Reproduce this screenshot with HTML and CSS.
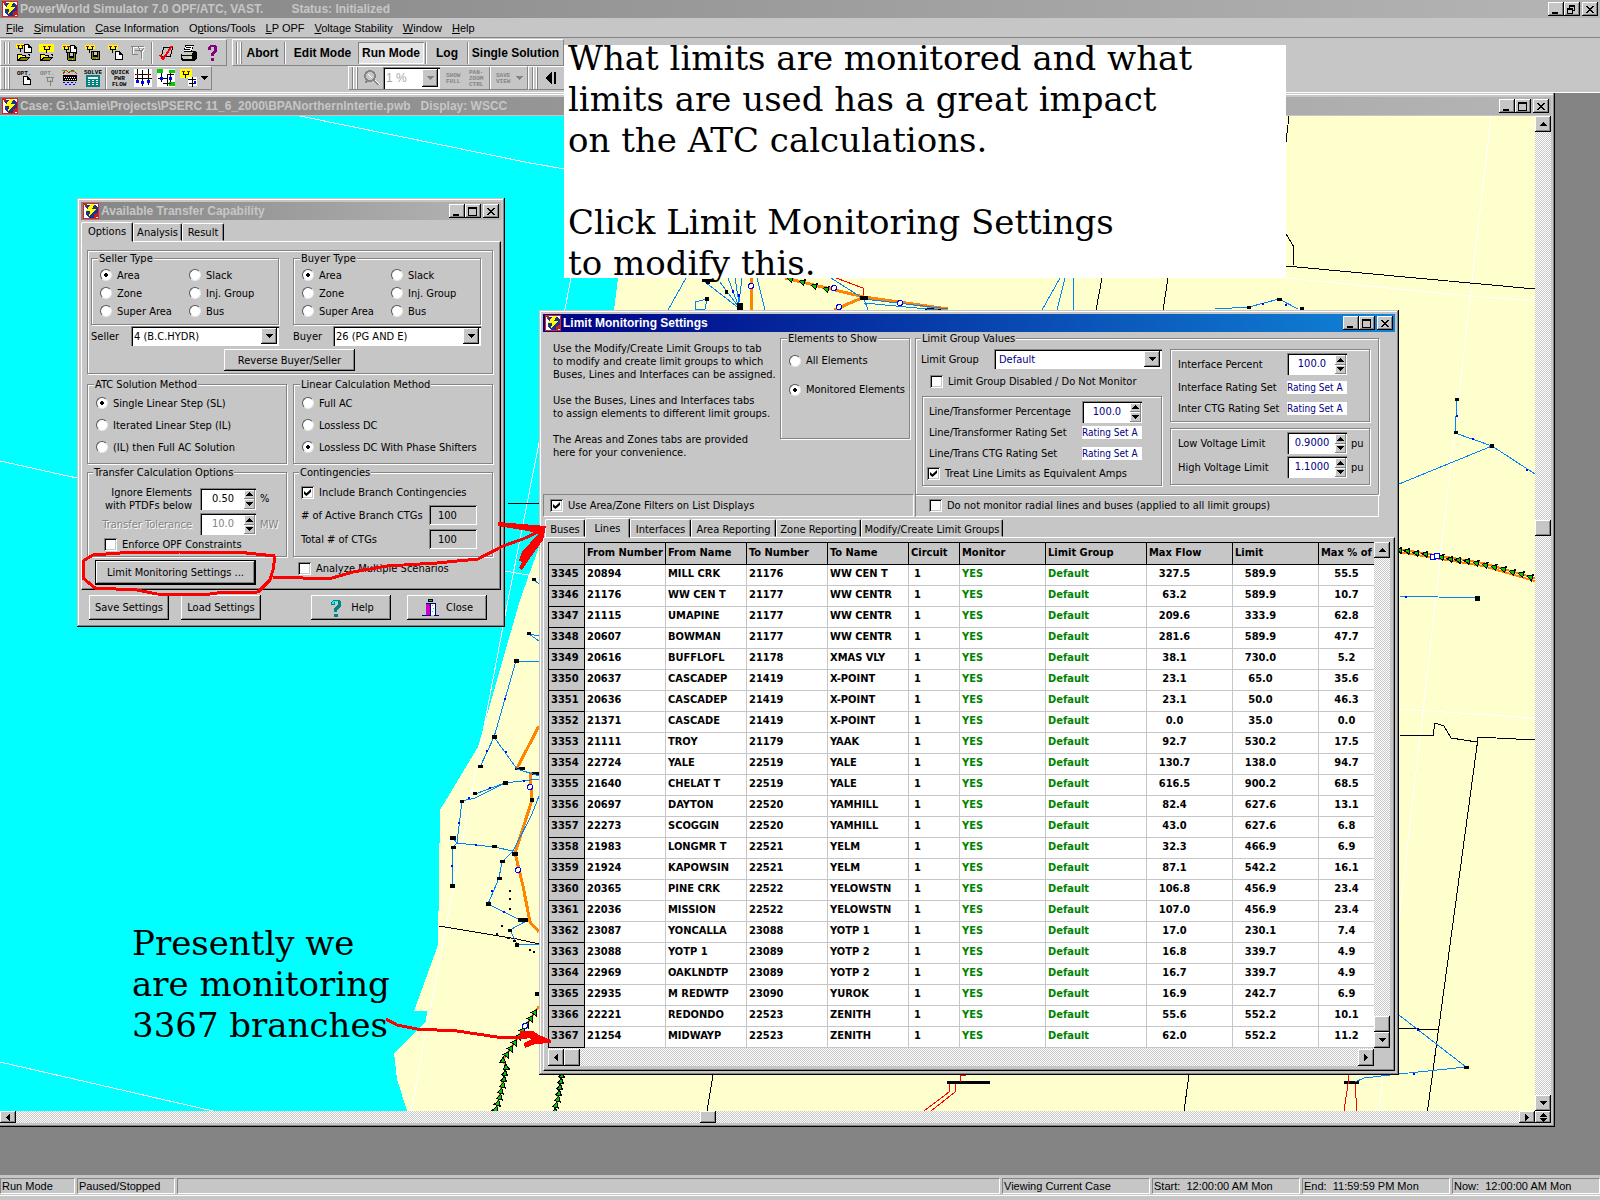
FILE: index.html
```html
<!DOCTYPE html>
<html lang="en">
<head>
<meta charset="utf-8">
<title>PowerWorld Simulator 7.0 OPF/ATC, VAST.</title>
<link rel="stylesheet" href="styles.css">
</head>
<body>
<svg class="defs" aria-hidden="true">
  <symbol id="app" viewBox="0 0 16 16"><path fill="#e02020" d="M0 0h16v16H0z"/><path fill="#fff" d="M1 1h14v14H1z"/><path fill="#203090" d="M1 3l3 2-1 7 4 3h4l4-3V5l-3-4-2 3-4-2z"/><path fill="#c02020" d="M1 1h3l-1 4zM11 11l4-1v4l-4 1z"/><path fill="#ff0" d="M8 1h4l-3 5h4l-7 8 1-6H3z"/></symbol>
  <symbol id="up" viewBox="0 0 7 4"><path d="M3 0h1v1h1v1h1v1h1v1H0V3h1V2h1V1h1z"/></symbol>
  <symbol id="down" viewBox="0 0 7 4"><path d="M0 0h7v1H6v1H5v1H4v1H3V3H2V2H1V1H0z"/></symbol>
  <symbol id="left" viewBox="0 0 4 7"><path d="M4 0v7H3V6H2V5H1V4H0V3h1V2h1V1h1V0z"/></symbol>
  <symbol id="right" viewBox="0 0 4 7"><path d="M0 0v7h1V6h1V5h1V4h1V3H3V2H2V1H1V0z"/></symbol>
  <symbol id="min" viewBox="0 0 10 9"><path d="M1 7h6v2H1z"/></symbol>
  <symbol id="max" viewBox="0 0 10 9"><path fill-rule="evenodd" d="M0 0h9v9H0zM1 2v6h7V2z"/></symbol>
  <symbol id="rest" viewBox="0 0 10 9"><path fill-rule="evenodd" d="M2 0h6v6H6v3H0V3h2zM3 2v1h3v2h1V2zM1 5v3h4V5z"/></symbol>
  <symbol id="x" viewBox="0 0 10 9"><path d="M1 1h2v1h1v1h2V2h1V1h2v1H8v1H7v1H6v1h1v1h1v1h1v1H7V7H6V6H4v1H3v1H1V7h1V6h1V5h1V4H3V3H2V2H1z"/></symbol>
  <symbol id="tree" viewBox="0 0 10 8"><path fill="#ff0" d="M0 0h10v4H0z"/><path fill="#a00" d="M1 1h3v1H1zM6 1h3v1H6z"/><path d="M2 2h1v2h4V2h1v3H5v3H4V5H2z"/></symbol>
  <symbol id="page" viewBox="0 0 8 10"><path d="M0 0h5l3 3v7H0z"/><path fill="#fff" d="M1 1h3v3h3v5H1z"/></symbol>
  <symbol id="folder" viewBox="0 0 14 8"><path d="M0 1h4l1 1h4v2h4l-3 4H0zM10 1h3v2h-1z"/><path fill="#ff0" d="M1 2h3l1 1h3v1H3L1 7z"/><path fill="#848400" d="M4 5h7L9 7H2z"/></symbol>
  <symbol id="disk" viewBox="0 0 9 9"><path d="M0 0h9v9H1L0 8z"/><path fill="#848400" d="M1 1h1v5h5V1h1v7H1z"/><path fill="#c6c6c6" d="M3 1h3v3H3zM5 7h1v1H5z"/></symbol>
</svg>

<header class="titlebar main">
  <svg class="ico"><use href="#app"/></svg><h1>PowerWorld Simulator 7.0 OPF/ATC, VAST.</h1><span class="status-text">Status: Initialized</span>
  <div class="winbtns"><button aria-label="Minimize"><svg><use href="#min"/></svg></button><button aria-label="Restore"><svg><use href="#rest"/></svg></button><button aria-label="Close"><svg><use href="#x"/></svg></button></div>
</header>
<nav class="menubar">
  <a href="#"><u>F</u>ile</a><a href="#"><u>S</u>imulation</a><a href="#"><u>C</u>ase Information</a><a href="#">O<u>p</u>tions/Tools</a><a href="#"><u>L</u>P OPF</a><a href="#"><u>V</u>oltage Stability</a><a href="#"><u>W</u>indow</a><a href="#"><u>H</u>elp</a>
</nav>

<div class="bars">
  <div class="barrow">
    <div class="bar t1"><i class="grip"></i>
      <button aria-label="Open case"><svg viewBox="0 0 18 18"><use href="#tree" x="1" y="0" width="9" height="8"/><use href="#page" x="9" y="0" width="8" height="9"/><use href="#folder" x="2" y="9" width="14" height="8"/></svg></button>
      <button aria-label="Open display"><svg viewBox="0 0 18 18"><path fill="#ff0" d="M1 0h15v8H1z"/><use href="#tree" x="3" y="1" width="11" height="8"/><use href="#folder" x="2" y="9" width="14" height="8"/></svg></button>
      <button aria-label="Save case"><svg viewBox="0 0 18 18"><use href="#tree" x="1" y="1" width="9" height="8"/><use href="#page" x="9" y="1" width="7" height="9"/><use href="#disk" x="6" y="8" width="9" height="9"/></svg></button>
      <button aria-label="Save display"><svg viewBox="0 0 18 18"><use href="#tree" x="1" y="1" width="10" height="8"/><use href="#disk" x="7" y="7" width="9" height="9"/></svg></button>
      <button aria-label="New display"><svg viewBox="0 0 18 18"><use href="#tree" x="1" y="1" width="10" height="8"/><use href="#page" x="8" y="7" width="8" height="9"/></svg></button>
      <button aria-label="Browse"><svg viewBox="0 0 18 18"><path fill="none" stroke="#fff" d="M2 3.500h13M3.500 3v8M9 3l3 6 3-4M12.500 9v7"/><path fill="none" stroke="#848484" d="M1 2.500h13M2.500 2v8h5M8 2l3 6 3-4M11.500 8v7M5 6.500h5"/></svg></button>
      <i class="sep"></i>
      <button aria-label="Check"><svg viewBox="0 0 18 18"><path fill="none" stroke="#000" d="M6.500 3.500h9l-2 9h-9z"/><path fill="none" stroke="red" stroke-width="2" d="M3 11l3 4L15 2"/></svg></button>
      <button aria-label="Print"><svg viewBox="0 0 18 18"><path d="M5 1h9l-2 6h3l2 2v5l-3 3H2l-1-2v-5l3-3z"/><path fill="#fff" d="M6 2h7l-2 5H4z"/><path stroke="#000" d="M6 3.500h5M5 5.500h5"/><path fill="#c6c6c6" d="M3 8h10l-1 3H2zM2 12h10v3H3z"/><path fill="#ff0" d="M9 13h2v1H9z"/></svg></button>
      <button aria-label="Help"><svg viewBox="0 0 18 18"><path fill="#840084" d="M5 3l2-2h5l2 2v4l-3 3v2H8V9l3-3V3H8v3H5zM8 14h3v3H8z"/></svg></button>
    </div>
    <div class="bar t2"><i class="grip"></i><button class="w41">Abort</button><i class="sep"></i><button class="w71">Edit Mode</button><button class="w66 pressed">Run Mode</button><i class="sep"></i><button class="w38">Log</button><i class="sep"></i><button class="w91">Single Solution</button></div>
  </div>
  <div class="barrow">
    <div class="bar t3"><i class="grip"></i>
      <button aria-label="Options"><svg viewBox="0 0 18 18"><text x="2" y="6" class="pix">OPT.</text><use href="#page" x="8" y="7" width="8" height="9"/></svg></button>
      <button aria-label="Display options"><svg viewBox="0 0 18 18"><text x="2" y="6" class="pix dim">OPT.</text><path fill="none" stroke="#848484" d="M8 8.500h8M9.500 8v4h5V8M12.500 11v6"/></svg></button>
      <button aria-label="Simulation"><svg viewBox="0 0 18 18"><path fill="none" stroke="red" d="M2 5l3-4 3 3 4-3 4 4"/><path stroke="#0c0" d="M1 1.500h4M8 2.500h6"/><path d="M2 6h14v6H2z"/><path stroke="#fff" stroke-dasharray="1 1" d="M3 8.500h12M4 10.500h11"/><path fill="none" stroke="blue" stroke-dasharray="2 2" d="M2 13.500h13M4 15.500h11"/></svg></button>
      <button aria-label="Solve"><svg viewBox="0 0 18 18"><text x="0" y="5" class="pix">SOLVE</text><path fill="#008484" d="M2 6h14v12H2z"/><path fill="#fff" d="M4 8h10v2H4zM4 11h2v1H4zM8 11h2v1H8zM12 11h2v1h-2zM4 13h2v1H4zM8 13h2v1H8zM12 13h2v1h-2zM4 15h2v1H4zM8 15h2v1H8zM12 15h2v1h-2z"/></svg></button>
      <i class="sep"></i>
      <button aria-label="Quick power flow"><svg viewBox="0 0 18 18"><text x="0" y="5" class="pix">QUICK</text><text x="3" y="11" class="pix">PWR</text><text x="1" y="17" class="pix">FLOW</text></svg></button>
      <button aria-label="One-line"><svg viewBox="0 0 18 18"><path fill="#fff" d="M0 0h18v18H0z"/><path fill="none" stroke="#000" d="M1 5.500h16M1 9.500h8M9 9.500h9M3.500 0v13M8.500 1v10M14.500 0v16M8.500 9v8"/><path fill="#00f" d="M2 11h3v3H2zM7 12h3v3H7zM13 11h3v3h-3z"/><path fill="#c00" d="M2 5h3v1H2zM13 5h3v1h-3z"/></svg></button>
      <button aria-label="Bus view"><svg viewBox="0 0 18 18"><path fill="#fff" d="M0 0h18v18H0z"/><path fill="#0c0" d="M0 0h6v4H0zM12 1h6v3h-6zM12 13h6v4h-6z"/><path fill="none" stroke="#000" d="M1 9.500h9M4.500 4v9M10 5.500h7M13.500 4v9M6 14.500h8M10.500 5v12"/><path fill="#00f" d="M3 8h3v3H3zM12 8h3v3h-3z"/></svg></button>
      <button aria-label="Find bus"><svg viewBox="0 0 18 18"><path fill="#ff0" d="M0 0h12v9H0z"/><use href="#tree" x="1" y="1" width="10" height="8"/><path fill="#fff" d="M8 8h9v9H8z"/><path fill="none" stroke="#000" d="M8 10.500h8M12.500 8v10M9 14.500h7"/><path fill="#00f" d="M14 12h2v3h-2z"/></svg></button>
      <svg class="dd"><use href="#down"/></svg>
    </div>
    <div class="bar t4"><i class="grip"></i>
      <button disabled aria-label="Zoom"><svg viewBox="0 0 18 18"><circle cx="7" cy="7" r="5" fill="#c6c6c6" stroke="#848484" stroke-width="2"/><path stroke="#848484" stroke-width="2" d="M10 10l6 6M2 14l3-3"/><path stroke="#fff" d="M12 11l5 5M5 5l4 4"/></svg></button>
      <span class="combo zoomc"><select disabled aria-label="Zoom percent"><option>1 %</option></select><i class="arr dimarr"><svg><use href="#down"/></svg></i></span>
      <button disabled aria-label="Show full"><svg viewBox="0 0 18 18"><text x="1" y="8" class="pix dim">SHOW</text><text x="1" y="14" class="pix dim">FULL</text></svg></button>
      <button disabled aria-label="Pan-zoom control"><svg viewBox="0 0 18 18"><text x="1" y="5" class="pix dim">PAN-</text><text x="1" y="11" class="pix dim">ZOOM</text><text x="1" y="17" class="pix dim">CTRL</text></svg></button>
      <i class="sep"></i>
      <button disabled aria-label="Save view"><svg viewBox="0 0 18 18"><text x="1" y="8" class="pix dim">SAVE</text><text x="1" y="14" class="pix dim">VIEW</text></svg></button>
      <svg class="dd dimarr"><use href="#down"/></svg>
    </div>
    <div class="bar t5"><i class="grip"></i><button aria-label="Back"><svg viewBox="0 0 18 18"><path d="M2 9l7-6v12zM11 3h2v12h-2z"/></svg></button></div>
  </div>
</div>

<main class="workspace">
  <section class="case">
    <header class="titlebar"><svg class="ico"><use href="#app"/></svg><h2>Case: G:\Jamie\Projects\PSERC 11_6_2000\BPANorthernIntertie.pwb &nbsp; Display: WSCC</h2>
      <div class="winbtns"><button aria-label="Minimize"><svg><use href="#min"/></svg></button><button aria-label="Maximize"><svg><use href="#max"/></svg></button><button aria-label="Close"><svg><use href="#x"/></svg></button></div></header>
    <div class="mapgrid">
      <svg class="map" viewBox="0 116 1535 995" preserveAspectRatio="xMinYMin slice">
        <defs><marker id="tri" viewBox="0 0 8 8" refX="4" refY="4" markerWidth="8" markerHeight="8" markerUnits="userSpaceOnUse" orient="auto"><path d="M0 4l7-4v8z"/><path fill="#0c0" d="M2 4l4-2v4z"/></marker></defs>
        <path fill="#ffffce" d="M0 116h1535v995H0z"/>
        <path fill="#0ff" d="M0 116h660L618 278 614 310 539 547 520 600 497 680 478 747 440 810 438 945 414 1011h13l-1 11-32 31 3 26 10 32H0z"/>
        <g fill="none" stroke="#fff"><path d="M300 116l230 47 35 6 721 109 184 18 65 5M600 116L571 278 539 443 508 600 411 1111M0 461l77 17 428 93 34 6M0 1062l213 49M1491 116L1464 350 1399 921 1379 1111M1399 709l136 9"/></g>
        <g fill="none" stroke="#000"><path d="M1289 116l-3 26M1286 234l8 13-1 18M1286 266l249 23M1102 278l-6 32M1168 278l-5 32M508 503l31 1M439 926l78 13 22 5M713 1075l-6 36M1189 1075l-5 36M1399 735l34 1 2-13 9 3 7 12 26 4v-5l58 3M1399 1028l39 2"/><path d="M1477.500 742l-50 369"/><path stroke-width="3" d="M947 1082h43M1344 1082h15M515 768h10M530 773h9M925 309h22M702 280h12"/></g>
        <g fill="none" stroke="red"><path d="M966 1075h-6v7M950 1084l-1 8-25 19M955 1084v8l-24 19M1348 1075v9l-4 27M1355 1084l2 27M836 278l27 10v9"/></g>
        <g fill="none" stroke="#ff8400" stroke-width="3"><path d="M539 726l-22 42M530 772l2 28-17 53 8 33 7 36 9 10M751 278v32M785 278l79 19 84 12M864 297l-30 13"/><path stroke-width="2" d="M539 1006l-36 54 3 7-10 44M562 1075l-7 36M1399 549l84 14 52 15M1399 552l84 14 52 15"/></g>
        <path class="tris" fill="none" stroke="none" d="M539 1006l-4 6-4 6-4 6-4 6-4 6-4 6-4 6-4 6-4 6 3 7-1 6-1 6-1 6-2 6-1 6-2 6-2 6M562 1075l-1 6-1 6-1 6-1 6-2 6-1 6M1399 550l8 1 9 2 9 1 16 3 9 2 8 1 9 1 9 2 9 2 9 2 9 2 9 3 9 2 9 3M790 279l12 3 12 4 12 3 14 4"/>
        <g fill="none" stroke="#0084ff"><path d="M539 662l-23-1-22 76-14 30M494 737l23 32 22 7M529 634l10 7M529 634l10 2M539 779l-34 4-30 15-13 3-5 42 37 4 19 4 19-37 7-18M475 794l30-11M453 838l4 5-4 4-1 39M513 851l-11 11-3 16-11 26 32 16 8 0-18 10 7 14h22M1457 399l-2 34 37 13 43 28M1492 446l-93 38M1399 596l78 2M1399 1015l67 52-67 7-35 4-9 4M686 278l-18 32M831 278l33 21 4 11M864 299l84 10M864 303l84 8M1060 278l-18 32M1065 278l-8 32M1073 278v32M1215 309l34-2 30-8 19 10M705 282l35 27M720 282l20 27M728 278l12 32M735 278l5 32M742 278l-4 32M757 278l8 32M695 302l12-3-2 10h-10zM534 580l5 4"/></g>
        <g fill="#000"><path d="M514 659h5v4h-5zM492 735h5v4h-5zM478 765h5v3h-5zM527 632h4v3h-4zM503 781h5v4h-5zM473 792h4v3h-4zM460 800h4v3h-4zM450 836h6v4h-6zM451 846h5v3h-5zM450 884h5v4h-5zM492 845h5v3h-5zM500 860h5v3h-5zM497 877h5v3h-5zM486 902h5v4h-5zM518 918h10v4h-10zM508 929h4v3h-4zM515 943h4v4h-4zM1455 398h4v3h-4zM1454 431h4v3h-4zM1490 444h4v4h-4zM1475 596h5v5h-5zM1464 1066h5v3h-5zM1277 298h5v3h-5zM1247 306h4v3h-4zM1300 307h4v3h-4zM737 303h6v7h-6zM705 297h4v4h-4zM860 296h8v4h-8zM532 578h4v3h-4zM512 852h6v4h-6zM530 798h4v4h-4zM509 890h2v2h-2zM509 898h2v2h-2zM509 908h2v2h-2zM501 925h2v2h-2zM507 937h3v2h-3zM513 940h3v2h-3zM529 949h2v2h-2zM533 951h2v2h-2zM496 933h2v2h-2zM535 992h4v4h-4zM706 280h4v4h-4zM725 290h3v4h-3z"/></g>
        <g fill="#00f"><path d="M504 698h2v2h-2zM486 750h2v2h-2zM505 751h2v2h-2zM489 787h2v2h-2zM468 797h2v2h-2zM458 822h2v2h-2zM475 844h2v2h-2zM451 865h2v2h-2zM491 890h2v2h-2zM503 911h2v2h-2zM523 780h2v2h-2zM1456 415h2v2h-2zM1472 438h2v2h-2zM1526 469h2v2h-2zM1405 596h2v2h-2zM1413 1073h2v2h-2zM1417 1029h2v2h-2zM1285 304h2v2h-2zM1262 303h2v2h-2zM732 290h2v3h-2zM738 294h2v3h-2z"/></g>
        <g fill="#fff" stroke="#00f"><circle cx="530" cy="787" r="2.500"/><circle cx="518" cy="870" r="2.500"/><circle cx="525" cy="1026" r="2.500"/><circle cx="1433" cy="557" r="3"/><circle cx="1437" cy="556" r="3"/><circle cx="751" cy="286" r="2.500"/><circle cx="834" cy="288" r="2.500"/><circle cx="839" cy="307" r="2.500"/><circle cx="900" cy="303" r="2.500"/></g>
      </svg>
      <div class="vscroll"><button aria-label="Scroll up"><svg class="v"><use href="#up"/></svg></button><i class="thumb mid"></i><button class="last" aria-label="Scroll down"><svg class="v"><use href="#down"/></svg></button></div>
      <div class="hscroll low"><button aria-label="Scroll left"><svg class="h"><use href="#left"/></svg></button><i class="thumb"></i><button class="last" aria-label="Scroll right"><svg class="h"><use href="#right"/></svg></button></div>
      <button class="updown" aria-label="Resize"><svg class="v"><use href="#up"/></svg><svg class="v"><use href="#down"/></svg></button>
    </div>
  </section>
</main>

<footer class="statusbar"><span class="p75">Run Mode</span><span class="p98">Paused/Stopped</span><span class="grow"></span><span class="p148">Viewing Current Case</span><span class="p148">Start: &nbsp;12:00:00 AM Mon</span><span class="p148">End: &nbsp;11:59:59 PM Mon</span><span class="p148">Now: &nbsp;12:00:00 AM Mon</span></footer>

<section class="win atc">
  <header class="titlebar"><svg class="ico"><use href="#app"/></svg><h2>Available Transfer Capability</h2><div class="winbtns"><button aria-label="Minimize"><svg><use href="#min"/></svg></button><button aria-label="Maximize"><svg><use href="#max"/></svg></button><button aria-label="Close"><svg><use href="#x"/></svg></button></div></header>
  <div class="tabs" role="tablist"><button role="tab" class="on w52">Options</button><button role="tab" class="w49">Analysis</button><button role="tab" class="w42">Result</button></div>
  <div class="page">
    <div class="group parties">
      <fieldset class="type"><legend>Seller Type</legend>
        <label><input type="radio" name="st" checked>Area</label><label><input type="radio" name="st">Slack</label><label><input type="radio" name="st">Zone</label><label><input type="radio" name="st">Inj. Group</label><label><input type="radio" name="st">Super Area</label><label><input type="radio" name="st">Bus</label></fieldset>
      <fieldset class="type"><legend>Buyer Type</legend>
        <label><input type="radio" name="bt" checked>Area</label><label><input type="radio" name="bt">Slack</label><label><input type="radio" name="bt">Zone</label><label><input type="radio" name="bt">Inj. Group</label><label><input type="radio" name="bt">Super Area</label><label><input type="radio" name="bt">Bus</label></fieldset>
      <div class="pick"><label for="sel">Seller</label><span class="combo"><select id="sel"><option>4 (B.C.HYDR)</option></select><i class="arr"><svg><use href="#down"/></svg></i></span></div>
      <div class="pick"><label for="buy">Buyer</label><span class="combo"><select id="buy"><option>26 (PG AND E)</option></select><i class="arr"><svg><use href="#down"/></svg></i></span></div>
      <button class="btn reverse">Reverse Buyer/Seller</button>
    </div>
    <div class="pair">
      <fieldset class="method"><legend>ATC Solution Method</legend><label><input type="radio" name="m" checked>Single Linear Step (SL)</label><label><input type="radio" name="m">Iterated Linear Step (IL)</label><label><input type="radio" name="m">(IL) then Full AC Solution</label></fieldset>
      <fieldset class="method"><legend>Linear Calculation Method</legend><label><input type="radio" name="l">Full AC</label><label><input type="radio" name="l">Lossless DC</label><label><input type="radio" name="l" checked>Lossless DC With Phase Shifters</label></fieldset>
    </div>
    <div class="pair third">
      <fieldset class="transfer"><legend>Transfer Calculation Options</legend>
        <label for="ptdf">Ignore Elements<br>with PTDFs below</label><span class="spin"><input id="ptdf" value="0.50"><span><button aria-label="Up"><svg><use href="#up"/></svg></button><button aria-label="Down"><svg><use href="#down"/></svg></button></span></span><span>%</span>
        <label for="tol" class="off">Transfer Tolerance</label><span class="spin"><input id="tol" value="10.0" disabled><span><button aria-label="Up"><svg><use href="#up"/></svg></button><button aria-label="Down"><svg><use href="#down"/></svg></button></span></span><span class="off">MW</span>
        <label class="chk"><input type="checkbox">Enforce OPF Constraints</label></fieldset>
      <fieldset class="ctg"><legend>Contingencies</legend>
        <label class="chk"><input type="checkbox" checked>Include Branch Contingencies</label>
        <label for="act"># of Active Branch CTGs</label><input id="act" class="ro" value="100" readonly>
        <label for="tot">Total # of CTGs</label><input id="tot" class="ro" value="100" readonly></fieldset>
    </div>
    <div class="under"><button class="btn default">Limit Monitoring Settings ...</button><label class="chk"><input type="checkbox">Analyze Multiple Scenarios</label></div>
  </div>
  <div class="foot"><button class="btn">Save Settings</button><button class="btn">Load Settings</button>
    <button class="btn help"><svg viewBox="0 0 16 18" width="16" height="18"><path fill="#008484" d="M3 3l2-2h6l2 2v5l-4 3v2H6v-4l4-3V3H7v3H3zM6 15h4v3H6z"/><path fill="#0ff" d="M5 2h5v1H6v2H4V3z"/></svg>Help</button>
    <button class="btn"><svg viewBox="0 0 18 18" width="18" height="18"><path fill="#0c0" stroke="#000" d="M7.500.500h4v2h-4z"/><path fill="#000084" d="M4 4h11v12h3v1h-5V5h-3v12H5V5z"/><path fill="#c0c" d="M5 5h4v11H5z"/><path fill="#fff" d="M10 5h4v11h-4z"/><path fill="#000084" d="M1 16h5v1H1z"/><path fill="#0cc" d="M11 6h1v1h-1zM12 9h1v1h-1zM11 12h1v1h-1z"/></svg>Close</button></div>
</section>

<section class="win lms">
  <header class="titlebar active"><svg class="ico"><use href="#app"/></svg><h2>Limit Monitoring Settings</h2><div class="winbtns"><button aria-label="Minimize"><svg><use href="#min"/></svg></button><button aria-label="Maximize"><svg><use href="#max"/></svg></button><button aria-label="Close"><svg><use href="#x"/></svg></button></div></header>
  <div class="top">
    <div class="blurb"><p>Use the Modify/Create Limit Groups to tab<br>to modify and create limit groups to which<br>Buses, Lines and Interfaces can be assigned.</p><p>Use the Buses, Lines and Interfaces tabs<br>to assign elements to different limit groups.</p><p>The Areas and Zones tabs are provided<br>here for your convenience.</p></div>
    <fieldset class="show"><legend>Elements to Show</legend><label><input type="radio" name="e">All Elements</label><label><input type="radio" name="e" checked>Monitored Elements</label></fieldset>
    <fieldset class="values"><legend>Limit Group Values</legend>
      <div class="lcol">
        <div class="lg"><label for="lg">Limit Group</label><span class="combo navy"><select id="lg"><option>Default</option></select><i class="arr"><svg><use href="#down"/></svg></i></span></div>
        <label class="chk dis"><input type="checkbox">Limit Group Disabled / Do Not Monitor</label>
        <div class="group lines">
          <label for="a1">Line/Transformer Percentage</label><span class="spin navy"><input id="a1" value="100.0"><span><button aria-label="Up"><svg><use href="#up"/></svg></button><button aria-label="Down"><svg><use href="#down"/></svg></button></span></span>
          <label for="a2">Line/Transformer Rating Set</label><input id="a2" class="rs" value="Rating Set A">
          <label for="a3">Line/Trans CTG Rating Set</label><input id="a3" class="rs" value="Rating Set A">
          <label class="chk"><input type="checkbox" checked>Treat Line Limits as Equivalent Amps</label>
        </div>
      </div>
      <div class="rcol">
        <div class="group iface">
          <label for="b1">Interface Percent</label><span class="spin navy"><input id="b1" value="100.0"><span><button aria-label="Up"><svg><use href="#up"/></svg></button><button aria-label="Down"><svg><use href="#down"/></svg></button></span></span>
          <label for="b2">Interface Rating Set</label><input id="b2" class="rs" value="Rating Set A">
          <label for="b3">Inter CTG Rating Set</label><input id="b3" class="rs" value="Rating Set A">
        </div>
        <div class="group volt">
          <label for="c1">Low Voltage Limit</label><span class="spin navy"><input id="c1" value="0.9000"><span><button aria-label="Up"><svg><use href="#up"/></svg></button><button aria-label="Down"><svg><use href="#down"/></svg></button></span></span><span>pu</span>
          <label for="c2">High Voltage Limit</label><span class="spin navy"><input id="c2" value="1.1000"><span><button aria-label="Up"><svg><use href="#up"/></svg></button><button aria-label="Down"><svg><use href="#down"/></svg></button></span></span><span>pu</span>
        </div>
      </div>
    </fieldset>
  </div>
  <div class="filters"><label class="chk fl"><input type="checkbox" checked>Use Area/Zone Filters on List Displays</label><label class="chk fr"><input type="checkbox">Do not monitor radial lines and buses (applied to all limit groups)</label></div>
  <div class="tabs lt" role="tablist"><button role="tab" class="w39">Buses</button><button role="tab" class="on w45">Lines</button><button role="tab" class="w60">Interfaces</button><button role="tab" class="w85">Area Reporting</button><button role="tab" class="w85">Zone Reporting</button><button role="tab" class="w141">Modify/Create Limit Groups</button></div>
  <div class="page gridpage">
    <div class="tablewrap">
    <table>
      <colgroup><col class="c37"><col class="c81"><col class="c81"><col class="c81"><col class="c81"><col class="c51"><col class="c86"><col class="c101"><col class="c86"><col class="c86"><col></colgroup>
      <thead><tr><td></td><th>From Number</th><th>From Name</th><th>To Number</th><th>To Name</th><th>Circuit</th><th>Monitor</th><th>Limit Group</th><th>Max Flow</th><th>Limit</th><th>Max % of</th></tr></thead>
      <tbody>
<tr><th>3345<td>20894<td>MILL CRK<td>21176<td>WW CEN T<td>1<td>YES<td>Default<td>327.5<td>589.9<td>55.5
<tr><th>3346<td>21176<td>WW CEN T<td>21177<td>WW CENTR<td>1<td>YES<td>Default<td>63.2<td>589.9<td>10.7
<tr><th>3347<td>21115<td>UMAPINE<td>21177<td>WW CENTR<td>1<td>YES<td>Default<td>209.6<td>333.9<td>62.8
<tr><th>3348<td>20607<td>BOWMAN<td>21177<td>WW CENTR<td>1<td>YES<td>Default<td>281.6<td>589.9<td>47.7
<tr><th>3349<td>20616<td>BUFFLOFL<td>21178<td>XMAS VLY<td>1<td>YES<td>Default<td>38.1<td>730.0<td>5.2
<tr><th>3350<td>20637<td>CASCADEP<td>21419<td>X-POINT<td>1<td>YES<td>Default<td>23.1<td>65.0<td>35.6
<tr><th>3351<td>20636<td>CASCADEP<td>21419<td>X-POINT<td>1<td>YES<td>Default<td>23.1<td>50.0<td>46.3
<tr><th>3352<td>21371<td>CASCADE<td>21419<td>X-POINT<td>1<td>YES<td>Default<td>0.0<td>35.0<td>0.0
<tr><th>3353<td>21111<td>TROY<td>21179<td>YAAK<td>1<td>YES<td>Default<td>92.7<td>530.2<td>17.5
<tr><th>3354<td>22724<td>YALE<td>22519<td>YALE<td>1<td>YES<td>Default<td>130.7<td>138.0<td>94.7
<tr><th>3355<td>21640<td>CHELAT T<td>22519<td>YALE<td>1<td>YES<td>Default<td>616.5<td>900.2<td>68.5
<tr><th>3356<td>20697<td>DAYTON<td>22520<td>YAMHILL<td>1<td>YES<td>Default<td>82.4<td>627.6<td>13.1
<tr><th>3357<td>22273<td>SCOGGIN<td>22520<td>YAMHILL<td>1<td>YES<td>Default<td>43.0<td>627.6<td>6.8
<tr><th>3358<td>21983<td>LONGMR T<td>22521<td>YELM<td>1<td>YES<td>Default<td>32.3<td>466.9<td>6.9
<tr><th>3359<td>21924<td>KAPOWSIN<td>22521<td>YELM<td>1<td>YES<td>Default<td>87.1<td>542.2<td>16.1
<tr><th>3360<td>20365<td>PINE CRK<td>22522<td>YELOWSTN<td>1<td>YES<td>Default<td>106.8<td>456.9<td>23.4
<tr><th>3361<td>22036<td>MISSION<td>22522<td>YELOWSTN<td>1<td>YES<td>Default<td>107.0<td>456.9<td>23.4
<tr><th>3362<td>23087<td>YONCALLA<td>23088<td>YOTP 1<td>1<td>YES<td>Default<td>17.0<td>230.1<td>7.4
<tr><th>3363<td>23088<td>YOTP 1<td>23089<td>YOTP 2<td>1<td>YES<td>Default<td>16.8<td>339.7<td>4.9
<tr><th>3364<td>22969<td>OAKLNDTP<td>23089<td>YOTP 2<td>1<td>YES<td>Default<td>16.7<td>339.7<td>4.9
<tr><th>3365<td>22935<td>M REDWTP<td>23090<td>YUROK<td>1<td>YES<td>Default<td>16.9<td>242.7<td>6.9
<tr><th>3366<td>22221<td>REDONDO<td>22523<td>ZENITH<td>1<td>YES<td>Default<td>55.6<td>552.2<td>10.1
<tr><th>3367<td>21254<td>MIDWAYP<td>22523<td>ZENITH<td>1<td>YES<td>Default<td>62.0<td>552.2<td>11.2
      </tbody>
    </table>
    </div>
    <div class="vscroll"><button aria-label="Scroll up"><svg class="v"><use href="#up"/></svg></button><i class="thumb end"></i><button aria-label="Scroll down"><svg class="v"><use href="#down"/></svg></button></div>
    <div class="hscroll"><button aria-label="Scroll left"><svg class="h"><use href="#left"/></svg></button><i class="thumb"></i><button class="last" aria-label="Scroll right"><svg class="h"><use href="#right"/></svg></button></div>
  </div>
</section>

<aside class="note"><p>What limits are monitored and what<br>limits are used has a great impact<br>on the ATC calculations.</p><p class="gap">Click Limit Monitoring Settings<br>to modify this.</p></aside>
<aside class="note2"><p>Presently we<br>are monitoring<br>3367 branches</p></aside>
<svg class="ink" aria-hidden="true"><g fill="none" stroke="red" stroke-width="3" stroke-linejoin="round"><path d="M275 556l-38-4-34 1-23-1-60 1-27 2-10 6v17l12 10 42 2 20 4 46 1 14-2 41-1 12-12 3-10 2-14M273 577l30 1h29l21-6 34-6 50-3 41-4 25-13 20-7 21-10"/><path d="M386 1019l11 6 20 4 40 2 40 6 30 1"/></g><path fill="red" d="M498 522l48 4-3 14-13 18-8 12-3-2 3-6-3-1 3-9 16-18-10-3-30-5zM520 1031h13l6 4 12 5v3l-16 1-10 4-1-5 8-4-12-3z"/></svg>
</body>
</html>
```
FILE: styles.css
```css
:root { --face: #c6c6c6; --dark: #848484; --navy: #000084; --sys: "Liberation Sans", Arial, sans-serif; --tah: "DejaVu Sans Condensed", "DejaVu Sans", sans-serif; }
* { box-sizing: border-box; }
body { margin: 0; height: 100vh; display: flex; flex-direction: column; background: var(--face); font: 11px/13px var(--tah); color: #000; position: relative; overflow: hidden; }
h1, h2, p { margin: 0; font: inherit; }
button, input, select { font: inherit; color: inherit; margin: 0; padding: 0; border: 0; border-radius: 0; background: none; appearance: none; }
svg { display: block; shape-rendering: crispEdges; }
.defs { position: absolute; width: 0; height: 0; }

.titlebar { display: flex; align-items: center; height: 18px; flex: none; padding: 0 2px 0 2px; gap: 2px; font: bold 12px/18px var(--sys); color: var(--face); background: linear-gradient(90deg, #848484, #b5b5b5); white-space: nowrap; }
.titlebar.active { color: #fff; background: linear-gradient(90deg, #000084, #1084d6); }
.ico { width: 16px; height: 16px; flex: none; }
.status-text { margin-left: 26px; }
.winbtns { display: flex; margin-left: auto; }
.winbtns button, .vscroll button, .hscroll button, .thumb, .arr, .updown, .spin button { background: var(--face); box-shadow: inset -1px -1px #000, inset 1px 1px #fff, inset -2px -2px var(--dark); display: flex; align-items: center; justify-content: center; flex: none; }
.winbtns button { width: 16px; height: 14px; }
.winbtns button:last-child { margin-left: 2px; }
.winbtns svg { width: 10px; height: 9px; }

.menubar { display: flex; gap: 10px; height: 20px; padding: 0 6px; font: 11px/20px var(--sys); border-bottom: 1px solid var(--dark); flex: none; }
.menubar a { color: #000; text-decoration: none; }

.bars { flex: none; height: 55px; border-bottom: 1px solid #fff; padding-top: 1px; }
.barrow { display: flex; }
.bar { display: flex; align-items: center; border: 1px solid; border-color: #fff var(--dark) var(--dark) #fff; padding-left: 3px; font: bold 12px/14px var(--sys); white-space: nowrap; overflow: hidden; }
.barrow:first-child .bar { height: 27px; }
.barrow:last-child .bar { height: 24px; }
.t1 { width: 227px; margin-right: 5px; }
.t2 { width: 332px; }
.t3 { width: 212px; margin-right: 136px; }
.t4 { width: 180px; }
.t5 { width: 60px; }
.grip { width: 6px; height: 22px; margin-right: 2px; border: solid var(--dark); border-width: 0 1px; box-shadow: inset 1px 0 #fff, inset -1px 0 #fff; flex: none; }
.t2 .grip { margin-right: 0; }
.sep { width: 2px; height: 22px; margin: 0 1px; border-left: 1px solid var(--dark); border-right: 1px solid #fff; flex: none; }
.bar button { width: 23px; height: 22px; display: flex; align-items: center; justify-content: center; flex: none; }
.bar button svg { width: 18px; height: 18px; }
.bar .w41 { width: 41px; } .bar .w71 { width: 71px; } .bar .w66 { width: 66px; } .bar .w38 { width: 38px; } .bar .w91 { width: 91px; }
.bar .pressed { background: #e2e2e2; box-shadow: inset 1px 1px var(--dark), inset -1px -1px #fff; }
.pix { font: bold 6px/6px "Liberation Mono", monospace; }
.dim, .dimarr { fill: var(--dark); }
.dd { width: 7px; height: 4px; margin-left: 1px; flex: none; }

.combo { display: flex; height: 20px; background: #fff; box-shadow: inset 1px 1px var(--dark), inset 2px 2px #000, inset -1px -1px #fff; padding: 2px; flex: 1; min-width: 0; }
.combo select { flex: 1; min-width: 0; padding-left: 1px; }
.combo .arr { width: 16px; }
.arr svg { width: 7px; height: 4px; }
.bar .zoomc { flex: none; width: 57px; height: 22px; margin-right: 2px; font: 12px/14px var(--sys); color: var(--dark); }
.navy { color: var(--navy); }
.navy select { padding-left: 3px; }

.workspace { flex: 1; min-height: 0; display: flex; background: #848484; padding: 0 45px 48px 0; }
.case { flex: 1; min-width: 0; display: flex; flex-direction: column; background: var(--face); padding: 4px 4px 4px 0; box-shadow: inset -1px -1px #000, inset -2px -2px var(--dark), inset 0 1px var(--face), inset 0 2px #fff; }
.case .titlebar { margin-bottom: 1px; }
.mapgrid { flex: 1; min-height: 0; display: grid; grid-template: minmax(0, 1fr) 12px / minmax(0, 1fr) 16px; }
.map { width: 100%; height: 100%; }
.tris { marker-mid: url(#tri); }
.vscroll, .hscroll { background: repeating-conic-gradient(#fff 0 25%, var(--face) 0 50%) 0 0 / 2px 2px; display: flex; }
.vscroll { flex-direction: column; }
.vscroll button, .vscroll .thumb { width: 16px; height: 16px; }
.hscroll button, .hscroll .thumb { width: 16px; height: 100%; }
.last { margin-left: auto; }
.vscroll .last { margin: auto 0 0; }
.v { width: 7px; height: 4px; } .h { width: 4px; height: 7px; }
.vscroll .mid { width: 16px; height: 16px; margin-top: 388px; }
.vscroll .end { margin-top: auto; }
.low .thumb { margin-left: 684px; }
.updown { flex-direction: column; gap: 1px; }

.statusbar { flex: none; height: 25px; display: flex; gap: 2px; padding: 2px 0 6px; border-top: 1px solid var(--face); font: 11px/15px var(--sys); background: linear-gradient(#fff, #fff) 0 19px / 100% 1px no-repeat var(--face); }
.statusbar span { border: 1px solid; border-color: var(--dark) #fff #fff var(--dark); padding-left: 1px; white-space: nowrap; }
.p75 { width: 75px; } .p98 { width: 98px; } .p148 { width: 148px; } .grow { flex: 1; }

.win { position: absolute; display: flex; flex-direction: column; background: var(--face); padding: 4px; box-shadow: inset -1px -1px #000, inset 1px 1px var(--face), inset -2px -2px var(--dark), inset 2px 2px #fff; }
.atc { left: 77px; top: 198px; width: 428px; }
.lms { left: 539px; top: 310px; width: 860px; }

.tabs { display: flex; align-items: flex-end; height: 21px; }
.tabs button { height: 18px; border: 1px solid; border-color: #fff #000 transparent #fff; border-radius: 2px 2px 0 0; box-shadow: inset -1px 0 var(--dark); white-space: nowrap; }
.tabs .on { height: 20px; padding-bottom: 2px; background: var(--face); margin-bottom: -1px; position: relative; }
.w52 { width: 52px; } .w49 { width: 49px; } .w42 { width: 42px; } .w39 { width: 40px; } .w45 { width: 45px; } .w60 { width: 61px; } .w85 { width: 85px; } .w141 { width: 142px; }
.page { border: 1px solid; border-color: #fff #000 #000 #fff; box-shadow: inset -1px -1px var(--dark); }
.atc .page { height: 349px; padding: 8px 7px 0 5px; }

fieldset, .group { margin: 0; min-width: 0; padding: 0; border: 1px solid var(--dark); box-shadow: 1px 1px #fff, inset 1px 1px #fff; }
legend { margin-left: 5px; padding: 0 1px; height: 13px; background: var(--face); }
label { white-space: nowrap; }
label:has(input) { display: flex; align-items: center; gap: 5px; }
input[type=radio] { width: 12px; height: 12px; border-radius: 50%; background: #fff; border: 1px solid; border-color: #555 #e8e8e8 #e8e8e8 #555; flex: none; }
input[type=radio]:checked { background: radial-gradient(#000 0 2px, #fff 2px); }
input[type=checkbox] { width: 13px; height: 13px; background: #fff; box-shadow: inset 1px 1px var(--dark), inset -1px -1px #fff, inset 2px 2px #000, inset -2px -2px var(--face); flex: none; }
input[type=checkbox]:checked::before { content: ""; display: block; width: 7px; height: 7px; margin: 3px; background: #000; clip-path: polygon(0 28%, 35% 60%, 100% 0, 100% 42%, 35% 100%, 0 70%); }

.parties { height: 124px; padding: 1px 3px 0; display: grid; grid-template: 73px 21px 25px / 188px 188px; gap: 0 14px; align-items: start; }
.type { display: grid; grid-template: repeat(3, 18px) / 89px auto; padding: 1px 0 0 8px; height: 73px; }
.type legend, .method legend, .show legend, .ctg legend { margin-left: -2px; }
.pick { display: flex; align-items: center; margin-top: 1px; }
.pick label { width: 40px; }
.reverse { grid-column: 1 / 3; width: 131px; height: 22px; margin: 3px 0 0 133px; }
.btn { background: var(--face); box-shadow: inset -1px -1px #000, inset 1px 1px #fff, inset -2px -2px var(--dark); display: flex; align-items: center; justify-content: center; gap: 7px; white-space: nowrap; }
.pair { display: grid; grid-template-columns: 200px 200px; gap: 6px; margin-top: 4px; }
.method { height: 86px; padding: 1px 0 0 8px; display: grid; grid-auto-rows: 22px; }
.third { margin-top: 2px; }
.transfer, .ctg { height: 91px; }
.transfer { display: grid; grid-template: 27px 24px 16px / 104px 56px auto; column-gap: 8px; align-items: center; padding-top: 6px; }
.transfer > label:not(.chk) { text-align: right; }
.transfer > span:not(.spin) { margin-left: -4px; }
.transfer .chk { grid-column: 1 / 4; padding-left: 16px; }
.off { color: var(--dark); text-shadow: 1px 1px #fff; }
.spin { display: flex; height: 22px; background: #fff; padding: 2px 1px 1px 2px; box-shadow: inset 1px 1px var(--dark), inset 2px 2px #000, inset -1px -1px #fff; }
.spin input { flex: 1; min-width: 0; text-align: center; padding-bottom: 2px; }
.spin input:disabled { color: var(--dark); }
.spin > span { display: flex; flex-direction: column; width: 11px; }
.spin button { flex: 1; box-shadow: inset -1px -1px var(--dark), inset 1px 1px #fff; width: 11px; }
.spin svg { width: 7px; height: 4px; }
.ctg { display: grid; grid-template: 23px 22px 26px / 128px 48px; align-items: center; padding: 2px 0 0 7px; }
.ctg .chk { grid-column: 1 / 3; }
.ro { width: 48px; height: 20px; padding-left: 9px; box-shadow: inset 1px 1px var(--dark), inset -1px -1px #fff, inset 2px 2px #000, inset -2px -2px var(--face); }
.under { display: flex; align-items: flex-start; gap: 42px; margin-top: 3px; padding-left: 8px; }
.under .chk { padding-top: 2px; }
.default { width: 161px; height: 25px; border: 1px solid #000; }
.foot { display: flex; padding: 5px 8px 3px; }
.foot .btn { width: 80px; height: 25px; margin-right: 12px; }
.foot .help { margin: 0 16px 0 38px; }
.foot .btn:last-child { margin-right: 0; }

.top { display: grid; grid-template-columns: 1fr 130px 469px; padding-right: 16px; height: 162px; }
.blurb { padding: 10px 0 10px 10px; display: flex; flex-direction: column; gap: 13px; white-space: nowrap; }
.show { height: 107px; display: grid; grid-auto-rows: 29px; padding: 1px 0 0 8px; align-content: start; }
.values { height: 163px; margin-left: 5px; padding: 4px 0 0 5px; display: grid; grid-template-columns: 241px 200px; gap: 8px; }
.values legend { margin-left: 0; }
.lg { display: flex; align-items: center; }
.lg label { width: 73px; }
.dis { height: 24px; padding-left: 9px; }
.lines { display: grid; grid-template: 21px 21px 21px 19px / 153px 60px; padding: 4px 0 0 6px; align-items: center; height: 90px; margin-left: 1px; margin-top: 3px; }
.lines .chk { grid-column: 1 / 3; margin-left: -2px; }
.rs { width: 60px; height: 13px; background: #fff; color: var(--navy); font-size: 10px; }
.iface { display: grid; grid-template: 24px 23px 19px / 109px 60px; padding: 2px 0 0 7px; align-items: center; height: 73px; }
.volt { display: grid; grid-template: 24px 24px / 109px 60px auto; padding: 2px 0 0 7px; align-items: center; height: 57px; margin-top: 6px; }
.volt > span:not(.spin) { margin-left: 4px; }
.filters { display: grid; grid-template-columns: 371px 1fr; gap: 1px; margin-right: 16px; height: 23px; }
.filters label { border: 1px solid; border-color: var(--dark) #fff #fff var(--dark); padding-left: 6px; }
.filters .fr { padding-left: 13px; }
.lt { padding-left: 2px; height: 20px; }
.lt button { padding-top: 2px; }
.gridpage { padding: 4px 4px 4px; display: grid; grid-template: auto 18px / minmax(0, 1fr) 16px; }
.tablewrap { overflow: hidden; min-width: 0; border: solid #000; border-width: 1px 0 0 1px; }
.gridpage .hscroll { padding-top: 1px; }
table { width: 100%; table-layout: fixed; border-spacing: 0; font: bold 11px/13px var(--tah); background: #fff; }
.c37 { width: 36px; } .c81 { width: 81px; } .c51 { width: 51px; } .c86 { width: 86px; } .c101 { width: 101px; }
td, th { height: 21px; padding: 0 0 4px 2px; text-align: left; border: solid var(--face); border-width: 0 1px 1px 0; white-space: nowrap; overflow: hidden; }
thead td, thead th { height: 22px; padding-bottom: 3px; background: var(--face); border-color: #000; }
tbody th { background: var(--face); border-color: #000; font-weight: bold; }
td:nth-child(6) { padding-left: 5px; }
tbody td:nth-child(7), tbody td:nth-child(8) { color: #008400; }
tbody td:nth-child(9), tbody td:nth-child(10) { text-align: center; padding: 0 30px 4px 0; }
tbody td:nth-child(11) { text-align: center; padding: 0 0 4px; }
tbody td:last-child, thead th:last-child { border-right: 0; }

.note, .note2 { position: absolute; font: 34px/41px "DejaVu Serif", serif; white-space: nowrap; }
.note { left: 564px; top: 45px; width: 722px; height: 233px; background: #fff; padding-left: 4px; }
.note p:first-child { margin-top: -7px; }
.note .gap { margin-top: 41px; }
.note2 { left: 132px; top: 923px; }
.ink { position: absolute; inset: 0; width: 100%; height: 100%; pointer-events: none; }
```
